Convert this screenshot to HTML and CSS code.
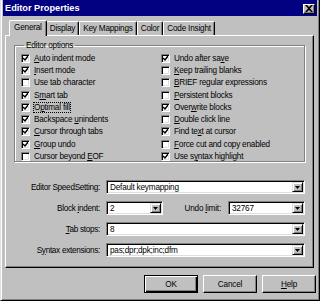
FILE: index.html
```html
<!DOCTYPE html>
<html lang="en">
<head>
    <meta charset="UTF-8">
    <title>Editor Properties</title>
    <link rel="stylesheet" href="styles.css">
</head>
<body>
    <div class="window">
        <div class="titlebar">
            <span class="title">Editor Properties</span>
            <span class="close">
                <svg width="8" height="7" viewBox="0 0 8 7"><path d="M0 0h2l2 2 2-2h2L5 3.5 8 7H6L4 5 2 7H0l3-3.5z" fill="#000"/></svg>
            </span>
        </div>

        <div class="tabs">
            <div class="tab active">General</div>
            <div class="tab">Display</div>
            <div class="tab">Key Mappings</div>
            <div class="tab">Color</div>
            <div class="tab">Code Insight</div>
        </div>

        <div class="panel">
            <fieldset class="group">
                <legend>Editor options</legend>
                <div class="checks">
                    <div class="check on"><span class="box"></span><span><u>A</u>uto indent mode</span></div>
                    <div class="check on"><span class="box"></span><span>Undo after sa<u>v</u>e</span></div>
                    <div class="check on"><span class="box"></span><span><u>I</u>nsert mode</span></div>
                    <div class="check"><span class="box"></span><span><u>K</u>eep trailing blanks</span></div>
                    <div class="check"><span class="box"></span><span>Use tab character</span></div>
                    <div class="check"><span class="box"></span><span><u>B</u>RIEF regular expressions</span></div>
                    <div class="check on"><span class="box"></span><span>S<u>m</u>art tab</span></div>
                    <div class="check"><span class="box"></span><span><u>P</u>ersistent blocks</span></div>
                    <div class="check on"><span class="box"></span><span class="focus">O<u>p</u>timal fill</span></div>
                    <div class="check on"><span class="box"></span><span>Over<u>w</u>rite blocks</span></div>
                    <div class="check on"><span class="box"></span><span>Backspace <u>u</u>nindents</span></div>
                    <div class="check"><span class="box"></span><span><u>D</u>ouble click line</span></div>
                    <div class="check on"><span class="box"></span><span><u>C</u>ursor through tabs</span></div>
                    <div class="check on"><span class="box"></span><span>Find te<u>x</u>t at cursor</span></div>
                    <div class="check on"><span class="box"></span><span><u>G</u>roup undo</span></div>
                    <div class="check"><span class="box"></span><span><u>F</u>orce cut and copy enabled</span></div>
                    <div class="check"><span class="box"></span><span>Cursor beyond <u>E</u>OF</span></div>
                    <div class="check on"><span class="box"></span><span>Use s<u>y</u>ntax highlight</span></div>
                </div>
            </fieldset>

            <div class="fields">
                <div class="row">
                    <label class="lbl">Editor SpeedSetting:</label>
                    <div class="combo wide"><span class="val">Default keymapping</span><span class="drop"></span></div>
                </div>
                <div class="row">
                    <label class="lbl">Block <u>i</u>ndent:</label>
                    <div class="combo small"><span class="val">2</span><span class="drop"></span></div>
                    <label class="lbl2">Undo <u>l</u>imit:</label>
                    <div class="combo mid"><span class="val">32767</span><span class="drop"></span></div>
                </div>
                <div class="row">
                    <label class="lbl"><u>T</u>ab stops:</label>
                    <div class="combo wide"><span class="val">8</span><span class="drop"></span></div>
                </div>
                <div class="row">
                    <label class="lbl">S<u>y</u>ntax extensions:</label>
                    <div class="combo wide"><span class="val">pas;dpr;dpk;inc;dfm</span><span class="drop"></span></div>
                </div>
            </div>
        </div>

        <div class="buttons">
            <button class="btn default">OK</button>
            <button class="btn">Cancel</button>
            <button class="btn"><u>H</u>elp</button>
        </div>
    </div>
</body>
</html>
```

FILE: styles.css
```css
body {
    margin: 0;
    background: #c0c0c0;
    font-family: 'Liberation Sans', Arial, sans-serif;
    font-size: 8.2px;
    letter-spacing: -0.2px;
    color: #000;
}
u {
    text-decoration: underline;
    text-underline-offset: 1px;
}
.window {
    width: 320px;
    height: 301px;
    box-sizing: border-box;
    background: #c0c0c0;
    border-left: 1px solid #dfdfdf;
    border-right: 1px solid #000;
    border-bottom: 1px solid #000;
    box-shadow: inset 1px 0 #fff, inset -1px -1px #808080;
    padding: 0 2px 0 2px;
}
.titlebar {
    height: 16px;
    background: #000080;
    color: #fff;
    display: flex;
    align-items: center;
    justify-content: space-between;
    padding: 0 2px 0 2px;
}
.title {
    font-weight: bold;
    font-size: 9.2px;
    letter-spacing: 0;
}
.close {
    width: 12px;
    height: 10px;
    margin-top: 1px;
    background: #c0c0c0;
    box-sizing: border-box;
    border-top: 1px solid #fff;
    border-left: 1px solid #fff;
    border-right: 1px solid #000;
    border-bottom: 1px solid #000;
    box-shadow: inset -1px -1px #808080;
    display: flex;
    align-items: center;
    justify-content: center;
}
.tabs {
    display: flex;
    align-items: flex-end;
    height: 19px;
    padding-left: 7px;
}
.tab {
    height: 13px;
    line-height: 13px;
    padding: 0 3px;
    border: 1px solid #fff;
    border-right: 1px solid #000;
    border-bottom: none;
    box-shadow: inset -1px 0 #808080;
    border-radius: 2px 2px 0 0;
}
.tab.active {
    height: 15px;
    line-height: 14px;
    padding: 0 4px 0 4px;
    margin: 0 -1px 0 -1px;
    position: relative;
    top: 1px;
    background: #c0c0c0;
    z-index: 1;
}
.panel {
    height: 233px;
    margin: 0 3px 0 2px;
    box-sizing: border-box;
    border-top: 1px solid #fff;
    border-left: 1px solid #fff;
    border-right: 1px solid #000;
    border-bottom: 1px solid #000;
    box-shadow: inset -1px -1px #808080;
    padding: 5px 8px 0 8px;
}
.group {
    margin: 0;
    padding: 2px 0 0 6px;
    height: 121px;
    box-sizing: border-box;
    border: 1px solid #808080;
    box-shadow: 1px 1px #fff, inset 1px 1px #fff;
}
.group legend {
    padding: 0 2px;
    margin-left: 3px;
}
.checks {
    display: grid;
    grid-template-columns: 140px 1fr;
    grid-auto-rows: 12.3px;
}
.check {
    display: flex;
    align-items: center;
    white-space: nowrap;
}
.box {
    width: 9px;
    height: 9px;
    box-sizing: border-box;
    background: #fff;
    border-top: 1px solid #808080;
    border-left: 1px solid #808080;
    border-right: 1px solid #fff;
    border-bottom: 1px solid #fff;
    box-shadow: inset 1px 1px #000, inset -1px -1px #dfdfdf;
    margin-right: 4px;
    flex: none;
}
.check.on .box {
    background: #fff url("data:image/svg+xml;utf8,<svg xmlns='http://www.w3.org/2000/svg' width='7' height='7' viewBox='0 0 7 7'><path d='M1 3l2 2 3-4' fill='none' stroke='black' stroke-width='1.4'/></svg>") center / 7px 7px no-repeat;
}
.focus {
    outline: 1px dotted #000;
    outline-offset: 0;
}
.fields {
    display: flex;
    flex-direction: column;
    gap: 7px;
    margin-top: 18px;
}
.row {
    display: flex;
    align-items: center;
    height: 14px;
}
.lbl {
    width: 86px;
    text-align: right;
    margin-right: 6px;
    white-space: nowrap;
    letter-spacing: -0.3px;
}
.lbl2 {
    width: 58px;
    text-align: right;
    margin-right: 7px;
}
.combo {
    height: 14px;
    box-sizing: border-box;
    background: #fff;
    border-top: 1px solid #808080;
    border-left: 1px solid #808080;
    border-right: 1px solid #fff;
    border-bottom: 1px solid #fff;
    box-shadow: inset 1px 1px #000, inset -1px -1px #dfdfdf;
    display: flex;
    align-items: center;
    padding: 0 1px 0 3px;
}
.combo.wide { width: 199px; }
.combo.small { width: 57px; }
.combo.mid { width: 77px; }
.val {
    flex: 1;
    white-space: nowrap;
    overflow: hidden;
}
.drop {
    width: 11px;
    height: 10px;
    box-sizing: border-box;
    background: #c0c0c0 url("data:image/svg+xml;utf8,<svg xmlns='http://www.w3.org/2000/svg' width='5' height='3' viewBox='0 0 5 3'><path d='M0 0h5L2.5 3z' fill='black'/></svg>") center / 5px 3px no-repeat;
    border-top: 1px solid #dfdfdf;
    border-left: 1px solid #dfdfdf;
    border-right: 1px solid #000;
    border-bottom: 1px solid #000;
    box-shadow: inset 1px 1px #fff, inset -1px -1px #808080;
}
.buttons {
    display: flex;
    justify-content: flex-end;
    gap: 5px;
    margin-top: 7px;
    padding-right: 1px;
}
.btn {
    width: 54px;
    height: 18px;
    padding: 0;
    font-family: inherit;
    font-size: 8.2px;
    letter-spacing: -0.2px;
    color: #000;
    background: #c0c0c0;
    border-top: 1px solid #fff;
    border-left: 1px solid #fff;
    border-right: 1px solid #000;
    border-bottom: 1px solid #000;
    box-shadow: inset -1px -1px #808080;
}
.btn.default {
    border: 1px solid #000;
    box-shadow: inset 1px 1px #fff, inset -1px -1px #000, inset -2px -2px #808080;
}
```
